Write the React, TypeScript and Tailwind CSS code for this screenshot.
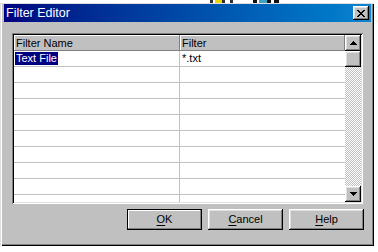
const font = "font-['Liberation_Sans',Arial,sans-serif]";

const raised =
  "shadow-[inset_-1px_-1px_0_#000,inset_1px_1px_0_#fff,inset_-2px_-2px_0_#808080,inset_2px_2px_0_#dfdfdf]";

function Arrow({ down }: { down?: boolean }) {
  return (
    <svg width="7" height="4" viewBox="0 0 7 4" shapeRendering="crispEdges" className={down ? "rotate-180" : ""}>
      <path d="M3 0h1v1h1v1h1v1h1v1H0V3h1V2h1V1h1z" fill="#000" />
    </svg>
  );
}

function ScrollButton({ down }: { down?: boolean }) {
  return (
    <div className={`flex h-[16px] w-[16px] items-center justify-center bg-[#c0c0c0] ${raised}`}>
      <Arrow down={down} />
    </div>
  );
}

function WinButton({ first, rest, def }: { first: string; rest: string; def?: boolean }) {
  return (
    <div
      className={`flex h-[21px] w-[75px] items-center justify-center bg-[#c0c0c0] text-[11px] text-black ${
        def
          ? "border border-black shadow-[inset_-1px_-1px_0_#808080,inset_1px_1px_0_#fff]"
          : raised
      }`}
    >
      <span>
        <span className="underline underline-offset-[2px]">{first}</span>
        {rest}
      </span>
    </div>
  );
}

const rows = Array.from({ length: 10 }, (_, i) => i);

export default function App() {
  return (
    <div className={`h-[252px] w-[378px] overflow-hidden bg-white ${font}`}>
      {/* bits of whatever sits behind the dialog */}
      <div className="flex h-[3px]">
        <div className="ml-[210px] w-[3px] bg-[#303030]" />
        <div className="w-[2px] bg-white" />
        <div className="w-[7px] bg-[#e8d800]" />
        <div className="w-[3px] bg-[#303030]" />
        <div className="w-[5px] bg-white" />
        <div className="w-[3px] bg-[#303030]" />
        <div className="ml-[20px] w-[4px] bg-[#101010]" />
        <div className="w-[2px] bg-white" />
        <div className="w-[8px] bg-[#40a0c0]" />
        <div className="w-[4px] bg-[#101010]" />
        <div className="w-[3px] bg-white" />
        <div className="w-[5px] bg-[#101010]" />
      </div>

      <div className="flex h-[243px] w-[374px] flex-col bg-[#c0c0c0] pl-[4px] pr-[3px] pt-[1px] shadow-[inset_1px_1px_0_#dfdfdf,inset_2px_0_0_#fff,inset_-1px_-1px_0_#000,inset_-2px_-2px_0_#808080]">
        {/* title bar */}
        <div className="flex h-[18px] items-center justify-between bg-gradient-to-r from-[#000080] to-[#1084d0] pl-[2px] pr-[2px]">
          <span className="text-[12.5px] leading-none text-white">Filter Editor</span>
          <div className={`flex h-[14px] w-[16px] items-center justify-center bg-[#c0c0c0] ${raised}`}>
            <svg width="8" height="7" viewBox="0 0 8 7" shapeRendering="crispEdges">
              <path
                d="M0 0h2v1H0zM6 0h2v1H6zM1 1h2v1H1zM5 1h2v1H5zM2 2h4v1H2zM3 3h2v1H3zM2 4h4v1H2zM1 5h2v1H1zM5 5h2v1H5zM0 6h2v1H0zM6 6h2v1H6z"
                fill="#000"
              />
            </svg>
          </div>
        </div>

        {/* grid */}
        <div className="ml-[8px] mt-[11px] flex h-[171px] w-[351px] bg-white p-[2px] shadow-[inset_1px_1px_0_#808080,inset_-1px_-1px_0_#fff,inset_2px_2px_0_#000,inset_-2px_-2px_0_#dfdfdf]">
          <div className="flex w-[331px] flex-col overflow-hidden text-[11px] text-black">
            <div className="flex h-[16px] shrink-0 bg-[#c0c0c0]">
              <div className="flex w-[166px] items-center pl-[2px] shadow-[inset_-1px_-1px_0_#808080,inset_1px_1px_0_#fff]">
                Filter Name
              </div>
              <div className="flex w-[165px] items-center pl-[2px] shadow-[inset_-1px_-1px_0_#808080,inset_1px_1px_0_#fff]">
                Filter
              </div>
            </div>
            {rows.map((i) => (
              <div key={i} className="flex h-[16px] shrink-0 border-b border-[#c0c0c0]">
                <div className="flex w-[166px] items-center border-r border-[#c0c0c0] pl-[1px]">
                  {i === 0 && (
                    <span className="flex h-[13px] items-center bg-[#000080] px-[1px] text-white">Text File</span>
                  )}
                </div>
                <div className="flex w-[165px] items-center pl-[2px]">{i === 0 && "*.txt"}</div>
              </div>
            ))}
          </div>
          <div className="flex w-[16px] flex-col">
            <ScrollButton />
            <div className={`h-[16px] w-[16px] shrink-0 bg-[#c0c0c0] ${raised}`} />
            <div className="flex-1 bg-[conic-gradient(#c0c0c0_25%,#fff_0_50%,#c0c0c0_0_75%,#fff_0)] bg-[length:2px_2px]" />
            <ScrollButton down />
          </div>
        </div>

        {/* buttons */}
        <div className="mr-[7px] mt-[5px] flex justify-end gap-[6px]">
          <WinButton first="O" rest="K" def />
          <WinButton first="C" rest="ancel" />
          <WinButton first="H" rest="elp" />
        </div>
      </div>
    </div>
  );
}
